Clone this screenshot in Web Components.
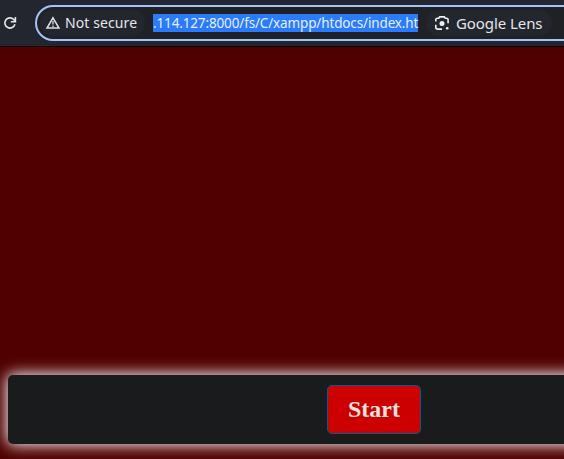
<!DOCTYPE html>
<html lang="en"><head><meta charset="utf-8"><title>Start</title>
<style>html,body{margin:0;height:100%;overflow:hidden;background:#500000}</style></head><body>
<browser-window></browser-window>
<script>
const define=(name,markup)=>customElements.define(name,class extends HTMLElement{
  constructor(){super();this.attachShadow({mode:'open'}).innerHTML=markup;}
});
define('reload-icon',`<style>:host{display:block;width:16px;height:16px}svg{display:block}</style>
<svg width="16" height="16" viewBox="0 0 16 16" fill="none" stroke="#e6e7ea" stroke-width="1.6"><path d="M12.9 9.2A5.1 5.1 0 1 1 11.6 4.4L13 5.8"/><path d="M13.4 2v4.7H8.8"/></svg>`);
define('warning-icon',`<style>:host{display:block;width:16px;height:16px}svg{display:block}</style>
<svg width="16" height="16" viewBox="0 0 16 16"><path d="M8 2.8 14 13H2Z" fill="none" stroke="#dfe1e5" stroke-width="1.5"/><path d="M8 6v3.6M8 10.4v1.5" stroke="#dfe1e5" stroke-width="1.3"/></svg>`);
define('lens-icon',`<style>:host{display:block;width:16px;height:16px}svg{display:block}</style>
<svg width="16" height="16" viewBox="0 0 16 16" fill="none" stroke="#eceef1" stroke-width="1.6"><path d="M1.8 6.4V4.8Q1.8 3.2 3.4 3.2H4.7L5.7 1.9H10.3L11.3 3.2H12.5Q14.1 3.2 14.1 4.8V8.3M1.8 9.8V12.2Q1.8 14.1 3.6 14.1H8"/><circle cx="8" cy="8.4" r="2.5" fill="#eceef1" stroke="none"/><circle cx="13.2" cy="13.3" r="1.3" fill="#eceef1" stroke="none"/></svg>`);
define('info-chip',`<style>:host{display:flex;align-items:center;flex:none;box-sizing:border-box;height:26px;border-radius:13px;background:#23262e;color:#e6e7ea;white-space:nowrap}</style>
<slot name="icon"></slot><slot></slot>`);
define('address-bar',`<style>
:host{display:flex;align-items:center;box-sizing:border-box;flex:none;width:640px;height:36px;border:2px solid #a4c3fb;border-radius:18px;background:#202124;padding-left:3px;font:14px/19px "Noto Sans",sans-serif}
.security{width:105px;padding-left:5px;font-size:14px}
.security span{margin-left:4px;letter-spacing:.1px}
.url{flex:none;box-sizing:border-box;width:265px;height:18px;margin:0 8px;background:#2a7bff;color:#e5eeff;white-space:nowrap;font-size:13.5px;letter-spacing:-.14px}
.url span{display:block}
.lens{width:126px;padding-left:8px;font-size:15px}
.lens span{margin:1px 0 0 6px;letter-spacing:-.08px}
</style>
<info-chip class="security"><warning-icon slot="icon"></warning-icon><span>Not secure</span></info-chip>
<div class="url"><span>.114.127:8000/fs/C/xampp/htdocs/index.ht</span></div>
<info-chip class="lens"><lens-icon slot="icon"></lens-icon><span>Google Lens</span></info-chip>`);
define('browser-toolbar',`<style>:host{display:flex;align-items:center;box-sizing:border-box;height:47px;padding:0 0 1px 2px;gap:17px;background:#23262e;border-bottom:1px solid #090204;overflow:hidden}reload-icon{flex:none}</style>
<reload-icon></reload-icon><address-bar></address-bar>`);
define('start-button',`<style>:host{display:block}button{display:block;box-sizing:border-box;width:94px;height:49px;padding:1px 0;border:1px solid #065b92;border-radius:5px;background:#c00;color:#e5e1dc;font:bold 24px/45px "Liberation Serif",serif}</style>
<button><slot></slot></button>`);
define('control-panel',`<style>:host{display:flex;align-items:center;justify-content:center;box-sizing:border-box;width:732px;height:69px;background:#1a1b1d;border-radius:5px;box-shadow:0 0 15px 1px #fff}</style><slot></slot>`);
define('web-page',`<style>:host{display:flex;flex-direction:column;justify-content:flex-end;box-sizing:border-box;flex:1;padding:0 0 15px 8px;background:#500000;overflow:hidden}</style><slot></slot>`);
define('browser-window',`<style>:host{display:flex;flex-direction:column;width:564px;height:459px;overflow:hidden}</style>
<browser-toolbar></browser-toolbar><web-page><control-panel><start-button>Start</start-button></control-panel></web-page>`);
</script></body></html>
